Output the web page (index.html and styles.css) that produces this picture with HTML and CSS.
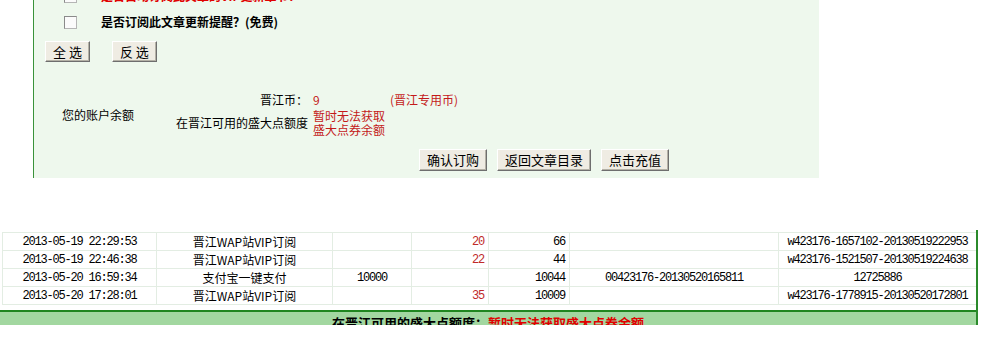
FILE: index.html
```html
<!DOCTYPE html>
<html lang="zh-CN">
<head>
    <meta charset="UTF-8">
    <title>晋江文学城 | 订购VIP章节</title>
    <link rel="stylesheet" href="styles.css">
</head>
<body>
    <div class="panel">
        <div class="opt">
            <span class="check"></span>
            <span class="opt-text red">是否自动订阅此文章的VIP更新章节？</span>
        </div>
        <div class="opt">
            <span class="check"></span>
            <span class="opt-text">是否订阅此文章更新提醒？(免费)</span>
        </div>

        <div class="select-row">
            <button type="button" class="btn">全 选</button>
            <button type="button" class="btn">反 选</button>
        </div>

        <div class="balance">
            <div class="balance-title">您的账户余额</div>
            <div class="b-label">晋江币：</div>
            <div class="b-value red"><span class="coin">9</span>(晋江专用币)</div>
            <div class="b-label">在晋江可用的盛大点额度</div>
            <div class="b-value red">暂时无法获取<br>盛大点券余额</div>
        </div>

        <div class="action-row">
            <button type="button" class="btn">确认订购</button>
            <button type="button" class="btn">返回文章目录</button>
            <button type="button" class="btn">点击充值</button>
        </div>
    </div>

    <div class="record">
        <table class="log">
            <colgroup>
                <col style="width:154px">
                <col style="width:176px">
                <col style="width:79px">
                <col style="width:77px">
                <col style="width:81px">
                <col style="width:209px">
                <col style="width:198px">
            </colgroup>
            <tbody>
                <tr>
                    <td class="num c">2013-05-19 22:29:53</td>
                    <td class="c">晋江WAP站VIP订阅</td>
                    <td class="num c"></td>
                    <td class="num r red">20</td>
                    <td class="num r">66</td>
                    <td class="num c"></td>
                    <td class="num c">w423176-1657102-20130519222953</td>
                </tr>
                <tr>
                    <td class="num c">2013-05-19 22:46:38</td>
                    <td class="c">晋江WAP站VIP订阅</td>
                    <td class="num c"></td>
                    <td class="num r red">22</td>
                    <td class="num r">44</td>
                    <td class="num c"></td>
                    <td class="num c">w423176-1521507-20130519224638</td>
                </tr>
                <tr>
                    <td class="num c">2013-05-20 16:59:34</td>
                    <td class="c">支付宝一键支付</td>
                    <td class="num c">10000</td>
                    <td class="num r red"></td>
                    <td class="num r">10044</td>
                    <td class="num c">00423176-20130520165811</td>
                    <td class="num c">12725886</td>
                </tr>
                <tr>
                    <td class="num c">2013-05-20 17:28:01</td>
                    <td class="c">晋江WAP站VIP订阅</td>
                    <td class="num c"></td>
                    <td class="num r red">35</td>
                    <td class="num r">10009</td>
                    <td class="num c"></td>
                    <td class="num c">w423176-1778915-20130520172801</td>
                </tr>
            </tbody>
        </table>
        <div class="sum-bar">在晋江可用的盛大点额度：<span class="bright">暂时无法获取盛大点券余额</span></div>
    </div>
</body>
</html>
```

FILE: styles.css
```css
body {
    margin: 0;
    background: #ffffff;
    color: #000;
    font-family: "Noto Sans CJK SC", "Liberation Sans", sans-serif;
    font-size: 12px;
    overflow: hidden;
}
.red {
    color: #c41a1a;
}

/* order panel */
.panel {
    margin: -17px 0 0 33px;
    width: 785px;
    padding-bottom: 7px;
    background-color: #eef8ed;
    border-left: 1px solid #3a923a;
}
.opt {
    display: flex;
    align-items: center;
    height: 26px;
}
.check {
    box-sizing: border-box;
    width: 13px;
    height: 13px;
    margin-left: 30px;
    background: #fbfbfb;
    border: 1px solid #b5b5b5;
    border-top-color: #8a8a8a;
    border-left-color: #8a8a8a;
}
.opt-text {
    margin-left: 24px;
    font-weight: bold;
    line-height: 16px;
}
.opt-text.red {
    color: #e00000;
}
.btn {
    box-sizing: border-box;
    height: 22px;
    padding: 0 7px;
    font-family: "Noto Sans CJK SC", sans-serif;
    font-size: 13px;
    line-height: 18px;
    color: #000;
    background: #efece3;
    border: 1px solid #ffffff;
    border-right-color: #6e6e6e;
    border-bottom-color: #6e6e6e;
    box-shadow: inset -1px -1px 0 #b4b1a6;
    border-radius: 0;
    cursor: pointer;
}
.select-row {
    display: flex;
    gap: 22px;
    margin: 6px 0 0 11px;
}
.select-row .btn {
    height: 21px;
}
.balance {
    display: grid;
    grid-template-columns: 137px 132px auto;
    grid-template-rows: 16px 30px;
    column-gap: 5px;
    margin-top: 30px;
    line-height: 14px;
}
.balance-title {
    grid-row: 1 / 3;
    align-self: center;
    padding-left: 28px;
}
.b-label {
    align-self: center;
    text-align: right;
    white-space: nowrap;
}
.b-value {
    align-self: center;
}
.coin {
    display: inline-block;
    width: 77px;
}
.action-row {
    display: flex;
    gap: 10px;
    margin: 11px 0 0 385px;
}

/* account record */
.record {
    box-sizing: border-box;
    width: 978px;
    height: 95px;
    margin-top: 52px;
    padding-top: 2px;
    overflow: hidden;
    border-right: 2px solid #2b8a2b;
}
.log {
    width: 974px;
    margin-left: 2px;
    border-collapse: collapse;
    table-layout: fixed;
}
.log td {
    height: 17px;
    padding: 0 4px;
    border: 1px solid #e3ede3;
    white-space: nowrap;
    overflow: hidden;
    line-height: 16px;
}
.log .num {
    font-family: "Liberation Mono", monospace;
    font-size: 12px;
    letter-spacing: -1.2px;
}
.log .c {
    text-align: center;
}
.log .r {
    text-align: right;
}
.log .red {
    color: #c02a2a;
}
.sum-bar {
    height: 12px;
    margin-top: 5px;
    padding-top: 3px;
    border-top: 2px solid #1f861f;
    background: #a2d7a0;
    font-size: 13px;
    font-weight: bold;
    line-height: 16px;
    text-align: center;
    overflow: hidden;
}
.bright {
    color: #e00000;
}
```
